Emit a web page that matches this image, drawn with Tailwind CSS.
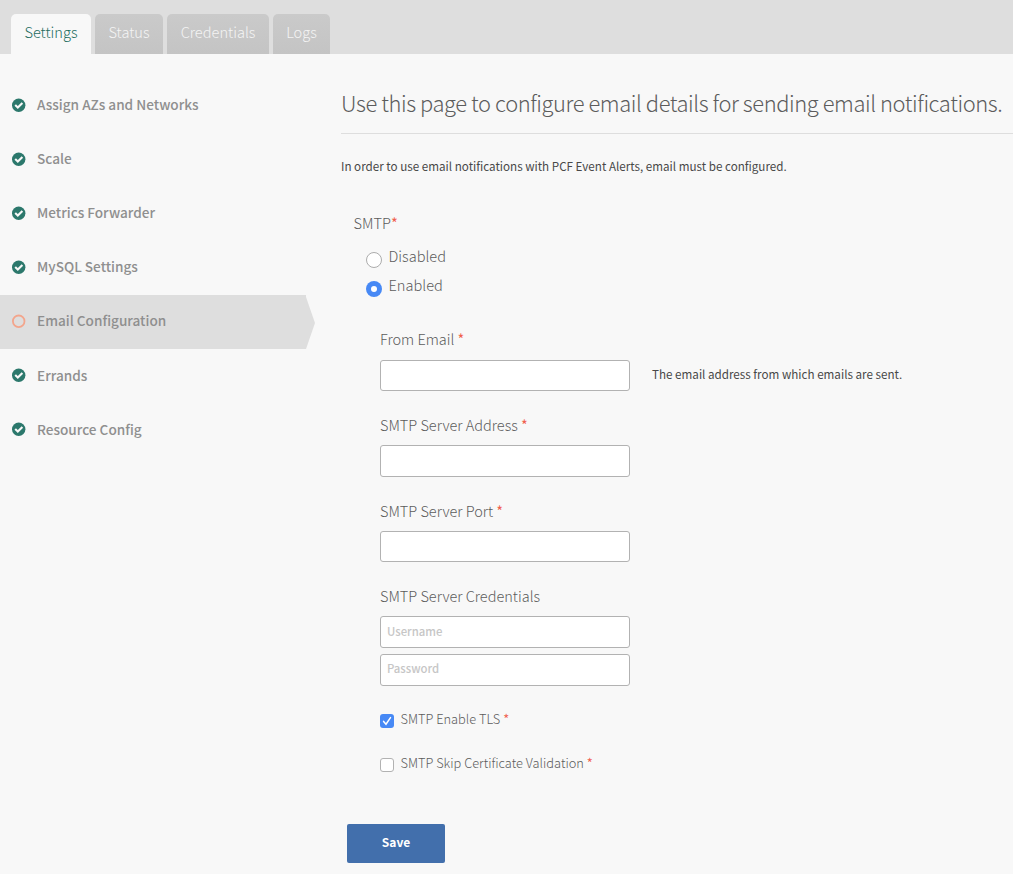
<!DOCTYPE html>
<html lang="en">
<head>
<meta charset="utf-8">
<title>Email Configuration</title>
<script src="https://cdn.jsdelivr.net/npm/@tailwindcss/browser@4"></script>
</head>
<body class="h-[874px] w-[1013px] overflow-hidden bg-[#f8f8f8] font-['Noto_Sans_CJK_SC','Open_Sans',sans-serif] text-[#5c5c5c]">
<svg class="hidden">
  <symbol id="done" viewBox="0 0 14 14"><circle cx="6.7" cy="7.2" r="6.7" fill="#2c786c"/><path d="M3.2 7 5.8 9.5 10.4 4.9" fill="none" stroke="#f8f8f8" stroke-width="2.1"/></symbol>
</svg>
<header class="flex h-[54px] items-end gap-1 bg-[#dedede] pl-[11px] text-[14.6px] font-light leading-9 text-[#f4f4f4]">
  <a class="h-10 w-20 rounded-t-[5px] bg-[#f8f8f8] text-center text-[#1c6c60]">Settings</a>
  <a class="h-10 w-[68px] rounded-t-[5px] bg-linear-to-b from-[#cacaca] to-[#c4c4c4] text-center">Status</a>
  <a class="h-10 w-[102px] rounded-t-[5px] bg-linear-to-b from-[#cacaca] to-[#c4c4c4] text-center">Credentials</a>
  <a class="h-10 w-[57px] rounded-t-[5px] bg-linear-to-b from-[#cacaca] to-[#c4c4c4] text-center">Logs</a>
</header>
<div class="flex">
  <nav class="w-[341px] shrink-0 pt-[25px] text-[13.6px] font-medium leading-[51px] text-[#8f8f8f]">
    <a class="flex h-[54px] gap-[11px] pl-3"><svg class="mt-[19px] size-[14px]"><use href="#done"/></svg><span>Assign AZs and Networks</span></a>
    <a class="flex h-[54px] gap-[11px] pl-3"><svg class="mt-[19px] size-[14px]"><use href="#done"/></svg><span>Scale</span></a>
    <a class="flex h-[54px] gap-[11px] pl-3"><svg class="mt-[19px] size-[14px]"><use href="#done"/></svg><span>Metrics Forwarder</span></a>
    <a class="flex h-[54px] gap-[11px] pl-3"><svg class="mt-[19px] size-[14px]"><use href="#done"/></svg><span>MySQL Settings</span></a>
    <a class="flex h-[54px] w-[315px]"><span class="flex w-[306px] gap-[11px] bg-[#dedede] pl-3"><svg class="mt-[19px] size-[14px]" viewBox="0 0 14 14"><circle cx="6.7" cy="7.3" r="5.8" fill="none" stroke="#f3a58c" stroke-width="1.8"/></svg><span>Email Configuration</span></span><svg class="h-[54px] w-[9px]" viewBox="0 0 9 54"><path d="M0 2 9 28 0 54Z" fill="#dedede"/></svg></a>
    <a class="mt-px flex h-[54px] gap-[11px] pl-3"><svg class="mt-[18px] size-[14px]"><use href="#done"/></svg><span>Errands</span></a>
    <a class="flex h-[54px] gap-[11px] pl-3"><svg class="mt-[18px] size-[14px]"><use href="#done"/></svg><span>Resource Config</span></a>
  </nav>
  <main class="w-[672px]">
    <h1 class="h-20 border-b border-[#dedede] pt-[29px] text-[21.9px] font-light leading-10 tracking-[-0.42px] whitespace-nowrap">Use this page to configure email details for sending email notifications.</h1>
    <p class="pt-[21px] text-[11.65px] leading-[22px] text-[#484848]">In order to use email notifications with PCF Event Alerts, email must be configured.</p>
    <form>
      <div class="mt-[34px] pl-[12.5px] text-[14.6px] font-light leading-6">SMTP<span class="font-normal text-[#f0604d]">*</span></div>
      <div class="pl-[25px] text-[14.6px] font-light">
        <label class="mt-[9px] flex h-[29px] gap-[6.5px] leading-6"><span class="mt-2 size-4 rounded-full border border-[#acacac] bg-white"></span><span>Disabled</span></label>
        <label class="flex h-[29px] gap-[6.5px] leading-6"><span class="mt-2 flex size-4 items-center justify-center rounded-full bg-[#4789f5]"><span class="size-1.5 rounded-full bg-white"></span></span><span>Enabled</span></label>
      </div>
      <div class="pl-[39px] text-[14.52px] font-light leading-6">
        <div class="mt-[25px]">From Email <span class="font-normal text-[#f0604d]">*</span></div>
        <div class="mt-[9px] flex h-[31px] gap-[22px]"><div class="w-[250px] rounded-[3px] border border-[#b2b2b2] bg-white"></div><span class="text-[11.65px] font-normal leading-[28px] text-[#484848]">The email address from which emails are sent.</span></div>
        <div class="mt-[22px]">SMTP Server Address <span class="font-normal text-[#f0604d]">*</span></div>
        <div class="mt-2 h-8 w-[250px] rounded-[3px] border border-[#b2b2b2] bg-white"></div>
        <div class="mt-[22px]">SMTP Server Port <span class="font-normal text-[#f0604d]">*</span></div>
        <div class="mt-2 h-[31px] w-[250px] rounded-[3px] border border-[#b2b2b2] bg-white"></div>
        <div class="mt-[22px]">SMTP Server Credentials</div>
        <div class="mt-2 h-8 w-[250px] rounded-[3px] border border-[#b2b2b2] bg-white pl-1.5 text-[11.35px] font-medium leading-[28px] text-[#c6c6c6]">Username</div>
        <div class="mt-1.5 h-8 w-[250px] rounded-[3px] border border-[#b2b2b2] bg-white pl-1.5 text-[11.35px] font-medium leading-[26px] text-[#c6c6c6]">Password</div>
        <label class="mt-[21px] flex h-11 gap-[6.5px] text-[12.82px]"><svg class="mt-[7px] size-[14px]" viewBox="0 0 14 14"><rect width="14" height="14" rx="3" fill="#4789f5"/><path d="M3.6 7.4 6 10.2 10.5 3.6" fill="none" stroke="#fff" stroke-width="1.5" stroke-linecap="round"/></svg><span>SMTP Enable TLS <span class="font-normal text-[#f0604d]">*</span></span></label>
        <label class="flex h-11 gap-[6.5px] text-[12.82px]"><span class="mt-[7px] size-[14px] rounded-[3px] border border-[#b2b2b2] bg-white"></span><span>SMTP Skip Certificate Validation <span class="font-normal text-[#f0604d]">*</span></span></label>
      </div>
      <button class="mt-[29px] ml-1.5 block h-[39px] w-[98px] rounded-[2px] bg-[#426fac] pb-[3px] text-[12px] font-bold leading-5 text-white">Save</button>
    </form>
  </main>
</div>
</body>
</html>
